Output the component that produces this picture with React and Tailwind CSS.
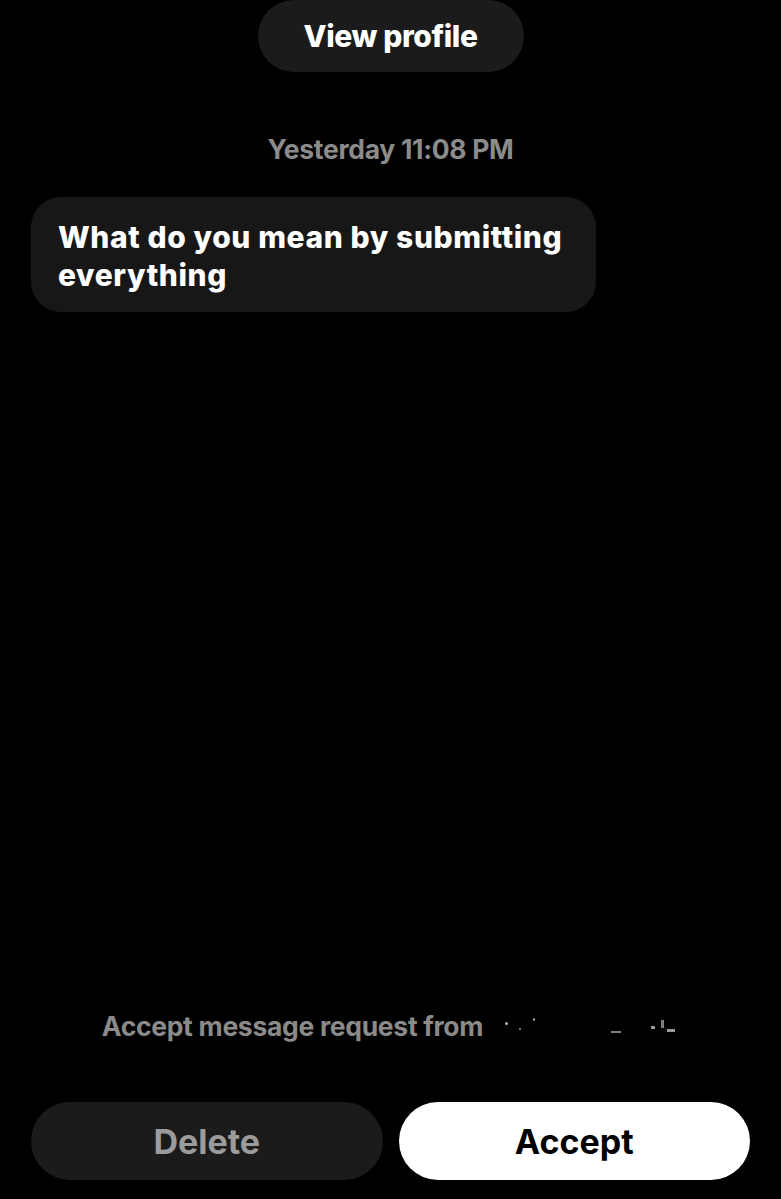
export default function App() {
  const font = { fontFamily: 'Inter, "Noto Sans", sans-serif' };
  return (
    <div className="w-[781px] h-[1199px] bg-black flex flex-col overflow-hidden" style={font}>
      <div className="flex justify-center">
        <button className="w-[266px] h-[72px] rounded-full bg-[#1b1b1b] text-white text-[30px] font-extrabold tracking-[-0.4px]">
          View profile
        </button>
      </div>
      <div className="mt-[60px] text-center text-[#8b8b8b] text-[26.5px] font-bold leading-[34px] tracking-[-0.3px]">
        Yesterday 11:08 PM
      </div>
      <div className="mt-[31px] ml-[31px] w-[565px] h-[115px] rounded-[30px] bg-[#171717] px-[27px] pt-[21px]">
        <p className="text-white text-[30px] font-extrabold leading-[38px] tracking-[0.6px]">
          What do you mean by submitting everything
        </p>
      </div>
      <div className="flex-1" />
      <div className="flex items-center justify-center pl-[4px] text-[#8a8a8a] text-[26.5px] font-bold leading-[34px] tracking-[-0.3px]">
        <span>Accept message request from</span>
        <span className="ml-[10px] relative w-[190px] h-[20px]">
          <span className="absolute left-[12px] top-[6px] w-[3px] h-[3px] bg-white/70 rounded-full" />
          <span className="absolute left-[26px] top-[12px] w-[2px] h-[2px] bg-white/60 rounded-full" />
          <span className="absolute left-[40px] top-[2px] w-[2px] h-[3px] bg-white/60 rounded-full" />
          <span className="absolute left-[118px] top-[15px] w-[10px] h-[2px] bg-white/50" />
          <span className="absolute left-[158px] top-[10px] w-[4px] h-[3px] bg-white/60" />
          <span className="absolute left-[168px] top-[4px] w-[3px] h-[8px] bg-white/50" />
          <span className="absolute left-[174px] top-[13px] w-[8px] h-[3px] bg-white/60" />
        </span>
      </div>
      <div className="mt-[59px] mb-[19px] px-[31px] flex gap-[16px]">
        <button className="flex-1 h-[78px] rounded-full bg-[#1b1b1b] text-[#9b9b9b] text-[34px] font-bold tracking-[0px]">
          Delete
        </button>
        <button className="flex-1 h-[78px] rounded-full bg-white text-black text-[34px] font-bold tracking-[0px]">
          Accept
        </button>
      </div>
    </div>
  );
}
